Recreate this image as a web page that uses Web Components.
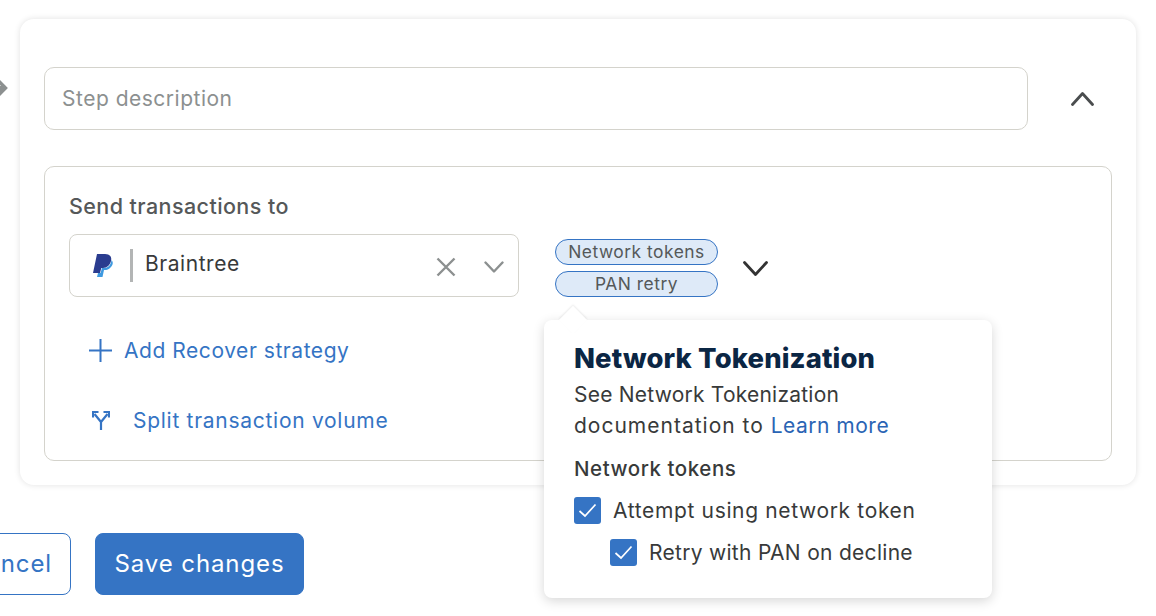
<!DOCTYPE html>
<html lang="en">
<head>
<meta charset="UTF-8">
<title>Step</title>
<style>
  html, body { margin: 0; padding: 0; background: #fff; overflow: hidden; height: 616px; }
  body { font-family: Inter, "Liberation Sans", sans-serif; color: #333; }
</style>
</head>
<body>
<step-page></step-page>

<script>
function define(name, html) {
  customElements.define(name, class extends HTMLElement {
    constructor() {
      super();
      this.attachShadow({ mode: 'open' }).innerHTML = html;
    }
  });
}
const chevron = (w, h, color, sw) => `<svg width="${w}" height="${h}" viewBox="0 0 ${w} ${h}" fill="none"><path d="M1.5 1.5 L${w / 2} ${h - 1.5} L${w - 1.5} 1.5" stroke="${color}" stroke-width="${sw}" stroke-linecap="round" stroke-linejoin="round"/></svg>`;
const BLUE = '#3574c4';

define('tag-chip', `
<style>
  :host { display: flex; align-items: center; justify-content: center; box-sizing: border-box; width: 163px; height: 26px; padding-bottom: 2px;
    background: #deeaf8; border: 1px solid ${BLUE}; border-radius: 13px; font-size: 17.4px; letter-spacing: .5px; color: #55595a; }
</style><slot></slot>`);

define('link-row', `
<style>
  :host { display: flex; align-items: center; color: ${BLUE}; font-size: 21px; letter-spacing: .6px; }
  .ic { display: flex; align-items: center; }
</style><span class="ic"><slot name="icon"></slot></span><slot></slot>`);

define('check-row', `
<style>
  :host { display: flex; align-items: center; gap: 12px; font-size: 21px; letter-spacing: .65px; color: #383a3a; }
  .box { width: 27px; height: 27px; border-radius: 3px; background: ${BLUE}; display: flex; align-items: center; justify-content: center; flex: none; }
</style>
<span class="box"><svg width="19" height="15" viewBox="0 0 19 15" fill="none"><path d="M1.5 8 L7 13 L17.5 1.5" stroke="#fff" stroke-width="1.7"/></svg></span>
<slot></slot>`);

define('token-popover', `
<style>
  :host { position: absolute; left: 499px; top: 153px; box-sizing: border-box; width: 448px; height: 278px; background: #fff;
    border-radius: 8px; box-shadow: 0 3px 12px rgba(0,0,0,.16); padding: 20px 30px 0; color: #383a3a; }
  .arrow { position: absolute; left: 19px; top: -10px; width: 20px; height: 20px; background: #fff; transform: rotate(45deg);
    box-shadow: -1px -1px 2px rgba(0,0,0,.08); }
  h2 { position: relative; margin: 0; font-size: 27.4px; line-height: 36px; font-weight: 800; color: #0b2644; letter-spacing: .15px; }
  p { position: relative; margin: 3px 0 0; font-size: 21px; line-height: 31px; letter-spacing: .22px; }
  .wide { letter-spacing: 1px; }
  a { color: #2a64b4; text-decoration: none; letter-spacing: .5px; }
  h3 { margin: 13px 0 0; font-size: 20.5px; line-height: 30px; font-weight: 500; letter-spacing: .55px; }
  .rows { display: flex; flex-direction: column; gap: 15px; margin-top: 13px; }
  .sub { margin-left: 36px; letter-spacing: .29px; }
</style>
<div class="arrow"></div>
<h2>Network Tokenization</h2>
<p>See Network Tokenization<br><span class="wide">documentation to <a>Learn more</a></span></p>
<h3>Network tokens</h3>
<div class="rows">
  <check-row>Attempt using network token</check-row>
  <check-row class="sub">Retry with PAN on decline</check-row>
</div>`);

define('gateway-select', `
<style>
  :host { display: flex; align-items: center; box-sizing: border-box; width: 450px; height: 63px; border: 1px solid #d4d3cc; border-radius: 8px; padding-left: 23px; }
  .sep { width: 3px; height: 33px; background: #b3b5b5; margin: 0 12px 0 17px; }
  .name { flex: 1; font-size: 21px; letter-spacing: .55px; color: #383a3a; margin-top: -4px; }
  .x { margin-right: 28px; margin-top: 3px; display: flex; }
  .v { margin-right: 14px; margin-top: 3px; display: flex; }
</style>
<svg width="20" height="23" viewBox="0 0 20 23">
  <path d="M18.5 6 C20.5 8 20 11 18 13 C16 15.5 14 16 11 16 L9.5 23 H4 L5 19 H7.5 L9 14 H11 C15 14 18 11 18.5 6 Z" fill="#3f9ae0"/>
  <path d="M4 0 H12 C17 0 19 3 18 7 C17 11 14 14 10 14 H8.3 L7 19 H0 Z" fill="#2a3c8f"/>
</svg>
<span class="sep"></span>
<span class="name">Braintree</span>
<span class="x"><svg width="20" height="20" viewBox="0 0 20 20" fill="none"><path d="M1.5 1.5 L18.5 18.5 M18.5 1.5 L1.5 18.5" stroke="#8c9090" stroke-width="2.4"/></svg></span>
<span class="v">${chevron(20, 12, '#8c9090', 2.4)}</span>`);

define('route-box', `
<style>
  :host { display: block; position: relative; box-sizing: border-box; width: 1068px; height: 295px; margin-top: 36px;
    border: 1px solid #d4d3cc; border-radius: 10px; padding: 25px 24px 0; }
  .label { font-size: 21.5px; line-height: 28px; font-weight: 500; color: #555859; letter-spacing: .42px; }
  .row { display: flex; align-items: center; margin-top: 14px; }
  .chips { display: flex; flex-direction: column; gap: 6px; margin-left: 36px; margin-top: 5px; }
  .open { margin-left: 25px; margin-top: 5px; display: flex; }
  .add { margin-top: 35px; margin-left: 20px; height: 36px; letter-spacing: .55px; }
  .split { margin-top: 34px; margin-left: 23px; height: 36px; letter-spacing: .72px; }
</style>
<div class="label">Send transactions to</div>
<div class="row">
  <gateway-select></gateway-select>
  <div class="chips"><tag-chip>Network tokens</tag-chip><tag-chip>PAN retry</tag-chip></div>
  <span class="open">${chevron(25, 15, '#333', 2.8)}</span>
</div>
<link-row class="add"><svg slot="icon" width="23" height="23" viewBox="0 0 23 23" style="margin-right:12px" fill="none"><path d="M11.5 0 V23 M0 11.5 H23" stroke="${BLUE}" stroke-width="2"/></svg>Add Recover strategy</link-row>
<link-row class="split"><svg slot="icon" width="18" height="19" viewBox="0 0 18 19" style="margin-right:23px" fill="none"><path d="M9 19 V11 L2.5 3 M9 11 L15.5 3" stroke="${BLUE}" stroke-width="2.2"/><path d="M1 6.5 V1 H6.5 M11.5 1 H17 V6.5" stroke="${BLUE}" stroke-width="2.2"/></svg>Split transaction volume</link-row>
<token-popover></token-popover>`);

define('step-card', `
<style>
  :host { display: block; box-sizing: border-box; width: 1116px; height: 466px; background: #fff; border-radius: 14px;
    box-shadow: 0 0 6px rgba(0,0,0,.12); padding: 48px 24px 0; }
  .top { display: flex; align-items: center; }
  .input { box-sizing: border-box; width: 984px; height: 63px; border: 1px solid #d4d3cc; border-radius: 10px; padding: 0 17px 1px;
    display: flex; align-items: center; font-size: 21px; letter-spacing: .5px; color: #8c9090; }
  .up { margin-left: 43px; display: flex; }
</style>
<div class="top">
  <div class="input">Step description</div>
  <span class="up"><svg width="23" height="14" viewBox="0 0 23 14" fill="none"><path d="M1.5 12.5 L11.5 1.5 L21.5 12.5" stroke="#4a4d4e" stroke-width="2.8" stroke-linecap="round" stroke-linejoin="round"/></svg></span>
</div>
<route-box></route-box>`);

define('ui-button', `
<style>
  :host { display: flex; align-items: center; justify-content: center; box-sizing: border-box; height: 62px; border-radius: 8px;
    font-size: 24px; letter-spacing: .9px; padding-bottom: 2px; border: 1px solid ${BLUE}; color: ${BLUE}; background: #fff; }
  :host([primary]) { background: ${BLUE}; color: #fff; }
</style><slot></slot>`);

define('step-page', `
<style>
  :host { display: block; position: relative; padding: 19px 0 0 20px; }
  .link { position: absolute; left: -9px; top: 81px; width: 14px; height: 14px; background: #8c9090; transform: rotate(45deg); }
  .link::after { content: ""; position: absolute; left: 3px; top: 3px; width: 4px; height: 4px; background: #fff; }
  .actions { display: flex; gap: 24px; margin: 48px 0 0 -71px; }
  .cancel { width: 122px; }
  .save { width: 209px; }
</style>
<div class="link"></div>
<step-card></step-card>
<div class="actions">
  <ui-button class="cancel">Cancel</ui-button>
  <ui-button class="save" primary>Save changes</ui-button>
</div>`);
</script>
</body>
</html>
